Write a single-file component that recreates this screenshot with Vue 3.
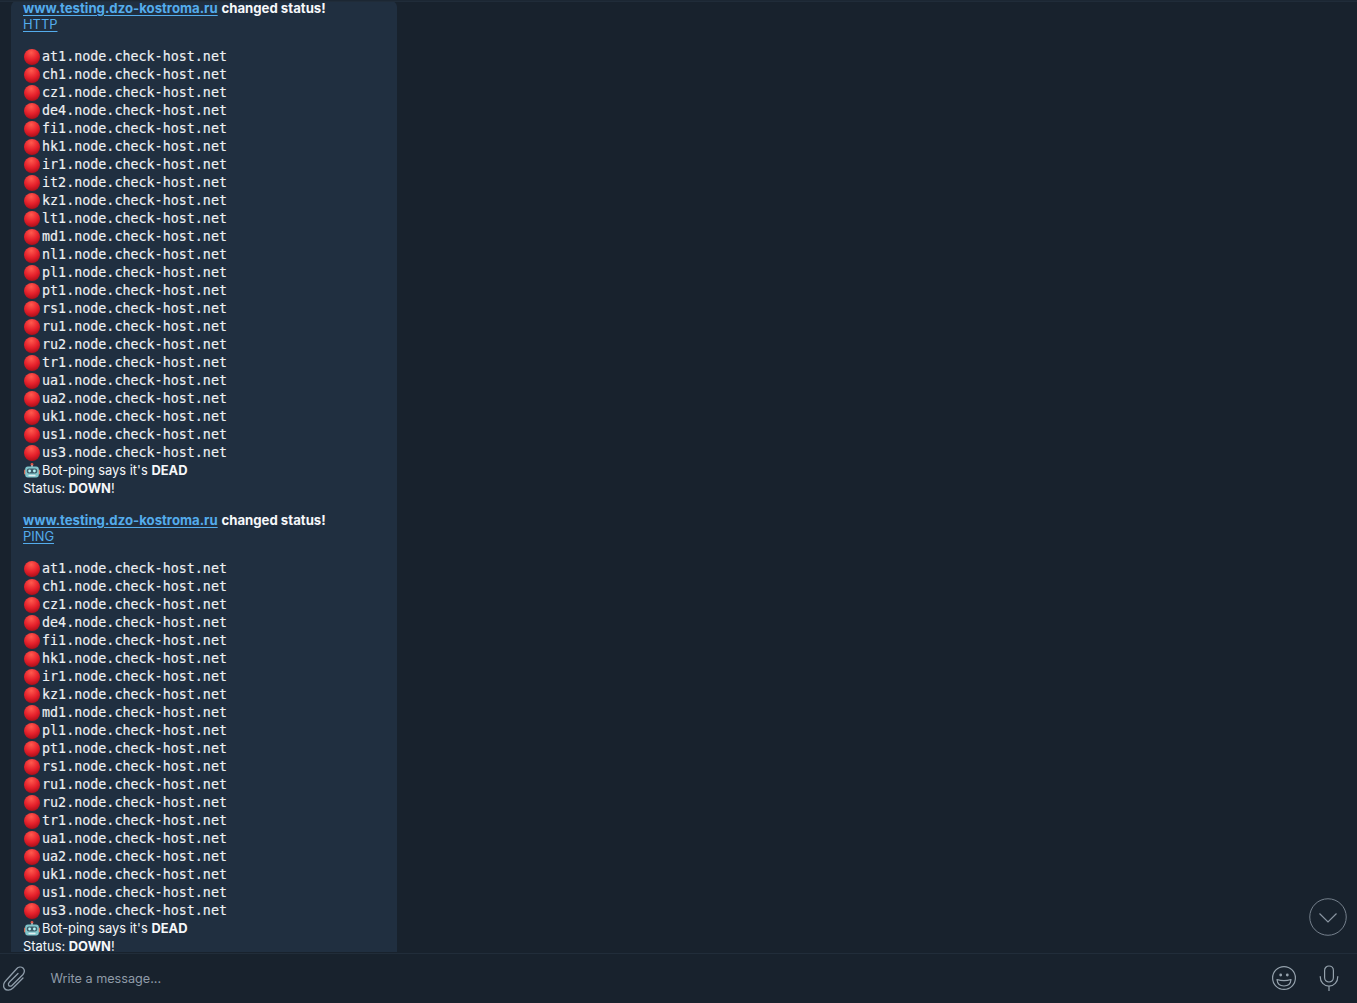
<script setup>
const http = ['at1','ch1','cz1','de4','fi1','hk1','ir1','it2','kz1','lt1','md1','nl1','pl1','pt1','rs1','ru1','ru2','tr1','ua1','ua2','uk1','us1','us3']
const ping = ['at1','ch1','cz1','de4','fi1','hk1','ir1','kz1','md1','pl1','pt1','rs1','ru1','ru2','tr1','ua1','ua2','uk1','us1','us3']
const blocks = [
  { kind: 'HTTP', nodes: http },
  { kind: 'PING', nodes: ping }
]
</script>

<template>
  <div class="app">
    <div class="topline"></div>
    <main class="chat">
      <div class="bubble">
        <section v-for="b in blocks" :key="b.kind" class="msg">
          <div class="line head"><a class="link strong">www.testing.dzo-kostroma.ru</a> <b>changed status!</b></div>
          <div class="line head"><a class="link plain">{{ b.kind }}</a></div>
          <div class="line spacer"></div>
          <div v-for="n in b.nodes" :key="n" class="row">
            <svg class="emoji" viewBox="0 0 18 18">
              <defs>
                <radialGradient id="red" cx="45%" cy="22%" r="85%">
                  <stop offset="0" stop-color="#ff5a4e" />
                  <stop offset="0.55" stop-color="#e5202b" />
                  <stop offset="1" stop-color="#9f0c17" />
                </radialGradient>
              </defs>
              <circle cx="9" cy="9" r="8" fill="url(#red)" />
            </svg>
            <span class="mono">{{ n }}.node.check-host.net</span>
          </div>
          <div class="row">
            <svg class="emoji robot" viewBox="0 0 18 18">
              <circle cx="9" cy="2.4" r="1.4" fill="#e2574a" />
              <rect x="8.4" y="3" width="1.2" height="2" fill="#c7d3d8" />
              <rect x="1" y="7.6" width="2.4" height="5" rx="1" fill="#cf6a55" />
              <rect x="14.6" y="7.6" width="2.4" height="5" rx="1" fill="#cf6a55" />
              <rect x="2.2" y="4.4" width="13.6" height="11" rx="2.6" fill="#82c6cc" />
              <rect x="3.8" y="6.4" width="10.4" height="5.2" rx="2" fill="#3c5c6a" />
              <circle cx="6.6" cy="9" r="1.4" fill="#b5f2f4" />
              <circle cx="11.4" cy="9" r="1.4" fill="#b5f2f4" />
              <rect x="5.4" y="12.7" width="7.2" height="1.5" rx="0.7" fill="#e2eced" />
            </svg>
            <span>Bot-ping says it's <b>DEAD</b></span>
          </div>
          <div class="row status">Status: <b>DOWN</b>!</div>
        </section>
      </div>
      <button class="down" aria-label="Scroll down">
        <svg viewBox="0 0 38 38" width="38" height="38">
          <circle cx="19" cy="19" r="18.25" fill="#18222d" stroke="#75808c" stroke-width="1" />
          <path d="M10.5 15.5 L19 24 L27.5 15.5" fill="none" stroke="#8a95a1" stroke-width="1.2" />
        </svg>
      </button>
    </main>
    <footer class="composer">
      <svg class="clip" viewBox="0 0 26 26" width="26" height="26">
        <path d="M22 13 L12 23 C9 26 5 25.6 3.5 23.5 C2 21 2.5 18 5 15.5 L15 4.5 C17 2 20 1.5 22 3 C24 5 23.5 7.5 22 9.5 L11 20.5 C10 21.5 8 21.5 7.5 20 C7 19 7.5 18 8.5 17 L17 8.5" fill="none" stroke="#8f9daa" stroke-width="1.3" stroke-linecap="round" />
      </svg>
      <span class="placeholder">Write a message...</span>
      <svg class="smile" viewBox="0 0 26 26" width="26" height="26">
        <circle cx="13" cy="13" r="11.4" fill="none" stroke="#95a2ad" stroke-width="1.2" />
        <circle cx="9.7" cy="10" r="1.4" fill="#95a2ad" />
        <circle cx="16.3" cy="10" r="1.4" fill="#95a2ad" />
        <path d="M6 14.5 Q13 16.8 20 14.5 Q19.5 21 13 21 Q6.5 21 6 14.5z" fill="none" stroke="#95a2ad" stroke-width="1.2" stroke-linejoin="round" />
      </svg>
      <svg class="mic" viewBox="0 0 20 26" width="20" height="26">
        <rect x="5.6" y="1" width="8.8" height="16" rx="4.4" fill="none" stroke="#95a2ad" stroke-width="1.2" />
        <path d="M1.2 11.5c0 5.6 3.8 9.6 8.8 9.6s8.8-4 8.8-9.6M10 21v5" fill="none" stroke="#95a2ad" stroke-width="1.2" stroke-linecap="round" />
      </svg>
    </footer>
  </div>
</template>

<style scoped>
.app {
  width: 1357px;
  height: 1003px;
  background: #18222d;
  color: #f6f8fa;
  font-family: Inter, "Liberation Sans", sans-serif;
  font-size: 12.9px;
  display: flex;
  flex-direction: column;
  overflow: hidden;
}
.topline {
  height: 2px;
  flex: none;
  background: #1c2733;
  border-bottom: 1px solid #202c39;
  box-sizing: border-box;
}
.chat {
  position: relative;
  flex: 1;
  min-height: 0;
  overflow: hidden;
  padding-left: 11px;
}
.bubble {
  width: 386px;
  height: 100%;
  box-sizing: border-box;
  background: #202f40;
  border-radius: 6px 6px 0 0;
  padding: 0 12px;
  overflow: visible;
}
.msg { margin-top: -1px; margin-bottom: 15px; }
.msg + .msg { margin-top: 0; }
.line { height: 16px; line-height: 14px; white-space: nowrap; font-size: 13.2px; }
.line.spacer { height: 15px; }
.head b { font-weight: 700; }
.link { color: #54acec; text-decoration: underline; text-underline-offset: 2px; }
.link.strong { font-weight: 700; }
.link.plain { font-size: 12.9px; }
.row {
  height: 18px;
  line-height: 18px;
  display: flex;
  align-items: center;
  white-space: pre;
}
.status { display: block; }
.emoji { width: 18px; height: 18px; margin-right: 1px; flex: none; }
.mono {
  font-family: "DejaVu Sans Mono", monospace;
  font-size: 13.36px;
  color: #eef1f4;
  -webkit-text-stroke: 0.15px #eef1f4;
}
.down {
  position: absolute;
  right: 10px;
  bottom: 17px;
  width: 38px;
  height: 38px;
  padding: 0;
  border: 0;
  background: transparent;
}
.composer {
  height: 50px;
  flex: none;
  box-sizing: border-box;
  border-top: 1px solid #212d3a;
  background: #18222d;
  display: flex;
  align-items: center;
  padding: 0 18px 1px 1px;
}
.clip { flex: none; }
.placeholder {
  margin-left: 23.5px;
  flex: 1;
  color: #8f9ba8;
  font-size: 12.65px;
}
.smile { flex: none; margin-right: 22px; }
.mic { flex: none; }
</style>
